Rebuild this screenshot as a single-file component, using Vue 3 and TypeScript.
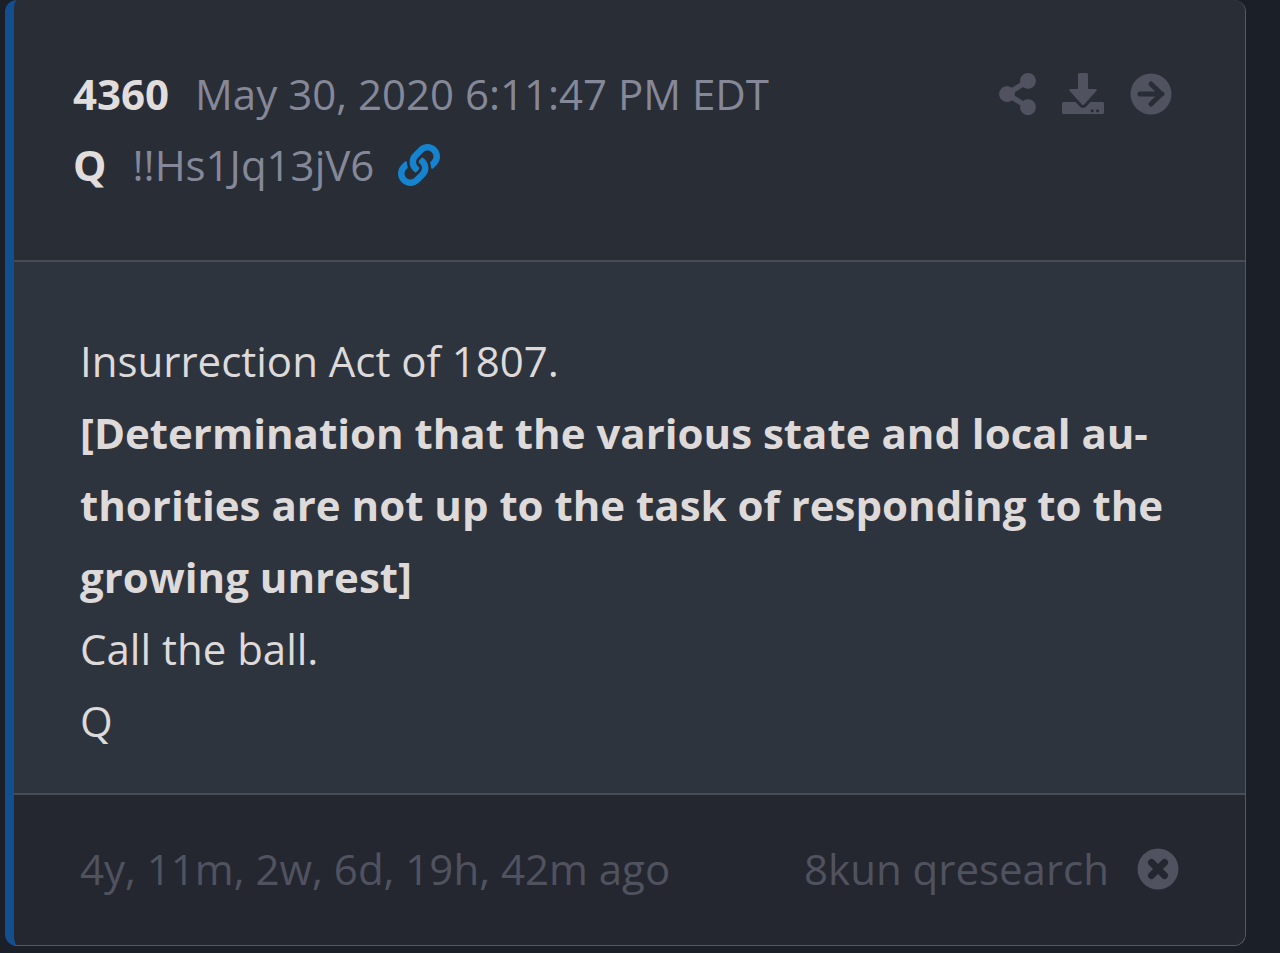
<script setup lang="ts">
const post = {
  id: '4360',
  date: 'May 30, 2020 6:11:47 PM EDT',
  author: 'Q',
  trip: '!!Hs1Jq13jV6',
  age: '4y, 11m, 2w, 6d, 19h, 42m ago',
  board: '8kun qresearch',
}

const lines: { text: string; strong?: boolean }[] = [
  { text: 'Insurrection Act of 1807.' },
  {
    text: '[Determination that the various state and local au\u00ADthorities are not up to the task of responding to the growing unrest]',
    strong: true,
  },
  { text: 'Call the ball.' },
  { text: 'Q' },
]
</script>

<template>
  <main class="page">
    <article class="card">
      <header class="head">
        <div class="meta">
          <div class="row">
            <strong class="key">{{ post.id }}</strong>
            <time datetime="2020-05-30T18:11:47-04:00">{{ post.date }}</time>
          </div>
          <div class="row">
            <strong class="key">{{ post.author }}</strong>
            <span>{{ post.trip }}</span>
            <a class="link" href="#4360" aria-label="Permalink">
              <svg class="icon" viewBox="0 0 512 512" aria-hidden="true">
                <path d="M326.612 185.391c59.747 59.809 58.927 155.698.36 214.59-.11.12-.24.25-.36.37l-67.2 67.2c-59.27 59.27-155.699 59.262-214.96 0-59.27-59.26-59.27-155.7 0-214.96l37.106-37.106c9.84-9.84 26.786-3.3 27.294 10.606.648 17.722 3.826 35.527 9.69 52.721 1.986 5.822.567 12.262-3.783 16.612l-13.087 13.087c-28.026 28.026-28.905 73.66-1.155 101.96 28.024 28.579 74.086 28.749 102.325.51l67.2-67.19c28.191-28.191 28.073-73.757 0-101.83-3.701-3.694-7.429-6.564-10.341-8.569a16.037 16.037 0 0 1-6.947-12.606c-.396-10.567 3.348-21.456 11.698-29.806l21.054-21.055c5.521-5.521 14.182-6.199 20.584-1.731a152.482 152.482 0 0 1 20.522 17.197zM467.547 44.449c-59.261-59.262-155.69-59.27-214.96 0l-67.2 67.2c-.12.12-.25.25-.36.37-58.566 58.892-59.387 154.781.36 214.59a152.454 152.454 0 0 0 20.521 17.196c6.402 4.468 15.064 3.789 20.584-1.731l21.054-21.055c8.35-8.35 12.094-19.239 11.698-29.806a16.037 16.037 0 0 0-6.947-12.606c-2.912-2.005-6.64-4.875-10.341-8.569-28.073-28.073-28.191-73.639 0-101.83l67.2-67.19c28.239-28.239 74.3-28.069 102.325.51 27.75 28.3 26.872 73.934-1.155 101.96l-13.087 13.087c-4.35 4.35-5.769 10.79-3.783 16.612 5.864 17.194 9.042 34.999 9.69 52.721.509 13.906 17.454 20.446 27.294 10.606l37.106-37.106c59.271-59.259 59.271-155.699.001-214.959z" />
              </svg>
            </a>
          </div>
        </div>
        <div class="actions">
          <button type="button" aria-label="Share">
            <svg class="icon share" viewBox="0 0 448 512" aria-hidden="true">
              <path d="M352 320c-22.608 0-43.387 7.819-59.79 20.895l-102.486-64.054a96.551 96.551 0 0 0 0-41.683l102.486-64.054C308.613 184.181 329.392 192 352 192c53.019 0 96-42.981 96-96S405.019 0 352 0s-96 42.981-96 96c0 7.158.79 14.13 2.276 20.841L155.79 180.895C139.387 167.819 118.608 160 96 160c-53.019 0-96 42.981-96 96s42.981 96 96 96c22.608 0 43.387-7.819 59.79-20.895l102.486 64.054A96.301 96.301 0 0 0 256 416c0 53.019 42.981 96 96 96s96-42.981 96-96-42.981-96-96-96z" />
            </svg>
          </button>
          <button type="button" aria-label="Download">
            <svg class="icon" viewBox="0 0 42 42" aria-hidden="true">
              <path d="M17.500 0h7q1.500 0 1.500 1.500V16h7.500q2.200 .3 .8 2L22.300 31.200q-1.300 1.400-2.600 0L7.700 18q-1.400-1.700 .8-2H16V1.500Q16 0 17.500 0z" />
              <path fill-rule="evenodd" d="M1.500 29H13.500l4.200 4.600q3.300 3 6.600 0l4.200-4.600h12q1.500 0 1.500 1.500v9q0 1.500-1.500 1.500h-39q-1.500 0-1.500-1.500v-9Q0 29 1.500 29zM30.200 36.200a1.600 1.600 0 1 0 0 3.200 1.600 1.600 0 0 0 0-3.200zm5.400 0a1.600 1.600 0 1 0 0 3.200 1.600 1.600 0 0 0 0-3.200z" />
            </svg>
          </button>
          <button type="button" aria-label="Open">
            <svg class="icon" viewBox="0 0 42 42" aria-hidden="true">
              <circle cx="21" cy="21" r="20.500" />
              <path class="cut" d="M10 21h22M21 11l10.500 10L21 31" />
            </svg>
          </button>
        </div>
      </header>

      <section class="body">
        <p v-for="line in lines" :key="line.text" :class="{ strong: line.strong }">{{ line.text }}</p>
      </section>

      <footer class="foot">
        <span>{{ post.age }}</span>
        <div class="board">
          <span>{{ post.board }}</span>
          <button type="button" aria-label="Hide">
            <svg class="icon" viewBox="0 0 42 42" aria-hidden="true">
              <circle cx="21" cy="21" r="20.500" />
              <path class="cross" d="M14.500 14.500l13 13M27.500 14.500l-13 13" />
            </svg>
          </button>
        </div>
      </footer>
    </article>
  </main>
</template>

<style>
body {
  margin: 0;
  background: #1b1f28;
}
</style>

<style scoped>
.page {
  padding: 0 34px 7px 5px;
  font-family: "Open Sans", "Noto Sans", sans-serif;
  font-size: 42px;
  font-weight: 400;
  line-height: 71px;
}

.card {
  overflow: hidden;
  border: 1px solid #555963;
  border-top: 0;
  border-left: 9px solid #134f8e;
  border-radius: 12px;
  background: #2e343e;
}

.head {
  display: flex;
  justify-content: space-between;
  padding: 58px 73px 60px 59px;
  border-bottom: 2px solid #474b55;
  background: #292d36;
  color: #858898;
}

.row {
  display: flex;
  align-items: center;
}

.key {
  margin-right: 26px;
  color: #e2dddd;
  font-weight: 700;
}

.link {
  display: flex;
  margin-left: 24px;
  color: #1583ce;
}

.icon {
  display: block;
  width: 42px;
  height: 42px;
  fill: currentColor;
}

.share {
  width: 37px;
}

.actions {
  display: flex;
  align-items: center;
  gap: 26px;
  height: 71px;
}

button {
  padding: 0;
  border: 0;
  background: none;
  color: #50535f;
  cursor: pointer;
}

.cut,
.cross {
  fill: none;
  stroke: #292d36;
  stroke-width: 5;
  stroke-linecap: round;
  stroke-linejoin: round;
}

.cross {
  stroke: #242730;
  stroke-width: 7;
}

.body {
  padding: 63px 66px 36px;
  border-bottom: 2px solid #484c56;
  color: #dedada;
  line-height: 72px;
}

p {
  margin: 0;
}

.strong {
  font-weight: 700;
}

.foot {
  display: flex;
  justify-content: space-between;
  padding: 38px 66px 41px;
  background: #242730;
  color: #50535f;
}

.board {
  display: flex;
  align-items: center;
  gap: 28px;
}
</style>
